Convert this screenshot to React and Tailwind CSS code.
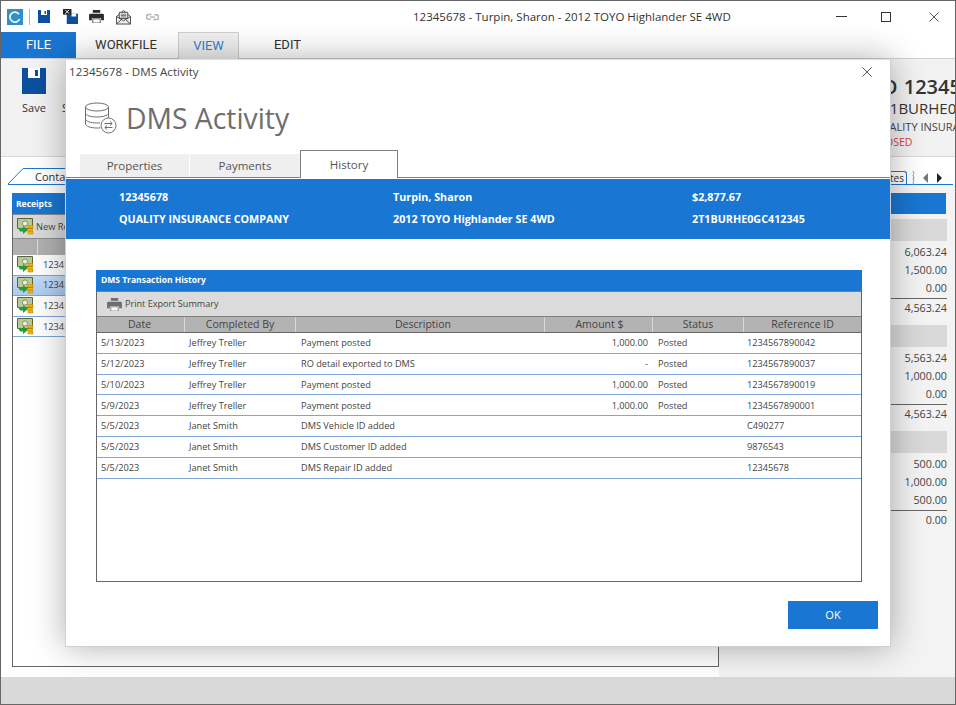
// App.jsx
// Repair-order window with the DMS Activity dialog open on top of it.

const UI = "[font-family:'Open_Sans','Noto_Sans',sans-serif]";

const historyRows = [
  ['5/13/2023', 'Jeffrey Treller', 'Payment posted', '1,000.00', 'Posted', '1234567890042'],
  ['5/12/2023', 'Jeffrey Treller', 'RO detail exported to DMS', '-', 'Posted', '1234567890037'],
  ['5/10/2023', 'Jeffrey Treller', 'Payment posted', '1,000.00', 'Posted', '1234567890019'],
  ['5/9/2023', 'Jeffrey Treller', 'Payment posted', '1,000.00', 'Posted', '1234567890001'],
  ['5/5/2023', 'Janet Smith', 'DMS Vehicle ID added', '', '', 'C490277'],
  ['5/5/2023', 'Janet Smith', 'DMS Customer ID added', '', '', '9876543'],
  ['5/5/2023', 'Janet Smith', 'DMS Repair ID added', '', '', '12345678'],
];

const totals = [
  ['6,063.24', '1,500.00', '0.00', '4,563.24'],
  ['5,563.24', '1,000.00', '0.00', '4,563.24'],
  ['500.00', '1,000.00', '500.00', '0.00'],
];

const columns = 'grid grid-cols-[88px_111px_249px_108px_91px_1fr]';

const headerCells = [
  ['Date', 'border-r border-[#d9d9d9] pr-[2px]'],
  ['Completed By', 'border-r border-[#d9d9d9]'],
  ['Description', 'border-r border-[#d9d9d9] pl-[6px]'],
  ['Amount $', 'border-r border-[#d9d9d9] pl-[2px]'],
  ['Status', 'border-r border-[#d9d9d9]'],
  ['Reference ID', ''],
];

function FloppyIcon({ className }) {
  return (
    <svg viewBox="0 0 24 26" className={className}>
      <path d="M0 0h24v26H0z" fill="#0b4f9e" />
      <path d="M6 0h12v10H6z" fill="#fff" />
      <path d="M13 2h3v6h-3z" fill="#0b4f9e" />
    </svg>
  );
}

function SaveCloseIcon() {
  return (
    <svg viewBox="0 0 16 16" className="w-[15px] h-[15px]">
      <path d="M4 5h12v11H4z" fill="#0b4f9e" />
      <path d="M9 5h5v3H9z" fill="#fff" />
      <path d="M0 0h9v6H0z" fill="#222" />
      <path d="M2.500 1l4 4M6.500 1l-4 4" stroke="#fff" strokeWidth="1" />
    </svg>
  );
}

function PrinterIcon({ className, color = '#2b2b2b' }) {
  return (
    <svg viewBox="0 0 16 14" className={className}>
      <path d="M4 0h8v3H4z" fill={color} />
      <path d="M1.500 4h13a1.500 1.500 0 0 1 1.500 1.500V11h-3V8.500H3V11H0V5.500A1.500 1.500 0 0 1 1.500 4z" fill={color} />
      <path d="M4 9.500h8V14H4z" fill="#fff" stroke={color} strokeWidth="0.8" />
    </svg>
  );
}

function MailIcon() {
  return (
    <svg viewBox="0 0 16 16" className="w-[15px] h-[16px]" fill="none" stroke="#444" strokeWidth="1">
      <path d="M.5 7.500v8h15v-8L8 1z" fill="#eee" />
      <path d="M3.500 3h9v6.500h-9z" fill="#fff" />
      <path d="M5 5h6M5 6.500h6M5 8h6" strokeWidth="0.8" />
      <path d="M.5 7.500 8 12l7.500-4.500M.5 15.500 6 10.500M15.500 15.500 10 10.500" />
    </svg>
  );
}

function LinkIcon() {
  return (
    <svg viewBox="0 0 14 8" className="w-[13px] h-[8px]" fill="none" stroke="#b4b4b4" strokeWidth="1.6">
      <path d="M6 1.200H3a2.600 2.600 0 0 0 0 5.200h2" />
      <path d="M8 6.800h3a2.600 2.600 0 0 0 0-5.200H9" />
      <path d="M4.500 4h5" />
    </svg>
  );
}

function ReceiptIcon() {
  return (
    <svg viewBox="0 0 17 17" className="w-[17px] h-[17px] shrink-0">
      <path d="M.5.5h15v10H.5z" fill="#b9c99a" stroke="#59663f" />
      <circle cx="8" cy="5.500" r="2.600" fill="#e9efd8" stroke="#6f8454" strokeWidth="0.8" />
      <path d="M1 10h5V8l5 4-5 4v-2.500H3z" fill="#2d9a32" />
      <path d="M11 7.500h5V10h-5zM10.500 10.500h5V13h-5zM11 13.500h5V16h-5z" fill="#f2b705" stroke="#b87d08" strokeWidth="0.5" />
    </svg>
  );
}

function DatabaseIcon() {
  return (
    <svg viewBox="0 0 32 32" className="w-[32px] h-[32px]" fill="none" stroke="#6f6f6f" strokeWidth="1">
      <ellipse cx="12" cy="5" rx="11.500" ry="4" />
      <path d="M.5 5v17c0 2.200 5 4 11.500 4 1.200 0 2.300 0 3.400-.2" />
      <path d="M23.500 5v11" />
      <path d="M.5 11c0 2.200 5 4 11.500 4 4.800 0 9-1 10.700-2.500" />
      <path d="M.5 17c0 2.200 5 4 11.500 4 1 0 2 0 3-.2" />
      <circle cx="23.500" cy="23.500" r="7.500" fill="#fff" />
      <path d="M19.500 21.500h7.500M25 19.500l2.200 2-2.200 2M27.500 25.500H20M22 23.500l-2.200 2 2.200 2" />
    </svg>
  );
}

function CloseGlyph({ className }) {
  return (
    <svg viewBox="0 0 11 11" className={className} fill="none" stroke="#444" strokeWidth="1">
      <path d="M.5.5l10 10M10.500.5l-10 10" />
    </svg>
  );
}

function TitleBar() {
  return (
    <div className="h-[31px] flex items-center relative shrink-0">
      <div className="flex items-center ml-[6px]">
        <div className="w-4 h-4 bg-[#2f8fc9] flex items-center justify-center">
          <svg viewBox="0 0 12 12" className="w-3 h-3" fill="none" stroke="#e8f6ff" strokeWidth="1.800">
            <path d="M10 3.200A5 5 0 1 0 10.600 8" />
          </svg>
        </div>
        <div className="w-px h-4 bg-[#b5b5b5] ml-[6px]" />
        <FloppyIcon className="w-3 h-[13px] ml-2" />
        <div className="ml-[13px]"><SaveCloseIcon /></div>
        <PrinterIcon className="w-[15px] h-[13px] ml-[11px]" />
        <div className="ml-[12px]"><MailIcon /></div>
        <div className="ml-[15px]"><LinkIcon /></div>
      </div>
      <span className={`absolute left-[412px] top-[8px] text-[11.500px] leading-[16px] whitespace-nowrap text-[#333] ${UI}`}>
        12345678 - Turpin, Sharon - 2012 TOYO Highlander SE 4WD
      </span>
      <div className="ml-auto flex items-center mr-[16px]">
        <div className="w-[11px] h-px bg-[#333]" />
        <div className="w-[10px] h-[10px] border border-[#333] ml-[34px]" />
        <CloseGlyph className="w-[10px] h-[10px] ml-[38px]" />
      </div>
    </div>
  );
}

function MenuBar() {
  return (
    <div className="h-[27px] flex text-[13px] text-[#333] border-b border-[#d0d0d0] shrink-0 [font-family:'Roboto',sans-serif]">
      <div className="w-[75px] h-[26px] bg-[#1976d2] text-white flex items-center justify-center">FILE</div>
      <div className="w-[102px] h-[26px] flex items-center justify-center pr-[2px]">WORKFILE</div>
      <div className="w-[61px] h-[27px] bg-[#f0f0f0] border border-[#cfcfcf] border-b-0 text-[#2f7fd8] flex items-center justify-center">VIEW</div>
      <div className="w-[95px] h-[26px] flex items-center justify-center pl-[2px]">EDIT</div>
    </div>
  );
}

function Ribbon() {
  return (
    <div className={`h-[98px] bg-[#f2f2f2] flex shrink-0 relative overflow-hidden border-b border-[#d8d8d8] ${UI}`}>
      <div className="w-[24px] ml-[21px] mt-[9px] flex flex-col items-center">
        <FloppyIcon className="w-6 h-[26px] shrink-0" />
        <span className="mt-[7px] text-[11px] leading-[14px] text-[#333]">Save</span>
      </div>
      <span className="ml-[16px] mt-[42px] text-[11px] leading-[14px] text-[#333]">Sync</span>
      <div className="absolute left-[872px] top-[15px] whitespace-nowrap">
        <div className="text-[20px] leading-[26px] font-semibold text-[#333] -ml-[4px] [word-spacing:1px]">RO 12345678</div>
        <div className="text-[15px] leading-[20px] mt-[-2px] text-[#333]">2T1BURHE0GC412345</div>
        <div className="text-[11px] leading-[14px] mt-[2px] text-[#444]">QUALITY INSURANCE COMPANY</div>
        <div className="text-[10.500px] leading-[14px] mt-[1px] text-[#d9413d]">CLOSED</div>
      </div>
    </div>
  );
}

function TabStrip() {
  return (
    <div className={`h-[28px] flex items-end relative shrink-0 border-b border-[#1976d2] ml-[7px] mr-[2px] text-[11px] text-[#333] ${UI}`}>
      <svg viewBox="0 0 18 16" className="w-[18px] h-[16px] shrink-0" fill="none" stroke="#1976d2">
        <path d="M0 16 15 .5h3" />
      </svg>
      <div className="h-[16px] w-[80px] border-t border-[#1976d2] pl-[9px] leading-[15px]">Contacts</div>
      <div className="ml-auto h-[13px] flex items-center mr-[11px]">
        <div className="h-[13px] border-t border-r border-[#1976d2] rounded-tr-[3px] bg-white pl-[6px] pr-[2px] leading-[12px] text-[10px]">Notes</div>
        <svg viewBox="0 0 3 14" className="w-[3px] h-[14px] ml-[5px]" fill="none" stroke="#5a8fd0">
          <path d="M1.500 0c-1.500 1 1.500 2 0 3.500s1.500 2 0 3.500 1.500 2 0 3.500 1.500 2 0 3.500" />
        </svg>
        <span className="ml-[8px] w-0 h-0 border-y-[5px] border-y-transparent border-r-[5px] border-r-[#777]" />
        <span className="ml-[9px] w-0 h-0 border-y-[5px] border-y-transparent border-l-[5px] border-l-[#222]" />
      </div>
    </div>
  );
}

function ReceiptsPanel() {
  return (
    <div className={`ml-[11px] mt-[8px] mb-[10px] w-[707px] shrink-0 border-l border-b border-r border-[#666] ${UI}`}>
      <div className="h-[21px] bg-[#1976d2] text-white text-[8.500px] font-bold flex items-center pl-[4px] pt-px -ml-px">Receipts</div>
      <div className="h-[25px] bg-[#d9d9d9] border-y border-[#8a8a8a] flex items-center pl-[4px] gap-[2px] text-[9.250px] text-[#444]">
        <ReceiptIcon />
        <span>New Receipt</span>
      </div>
      <div className="h-[16px] bg-[#b0b0b0] flex">
        <div className="w-[25px] border-r border-[#ddd]" />
      </div>
      {['1234', '1234', '1234', '1234'].map((num, i) => (
        <div
          key={i}
          className={`h-[20.600px] flex items-center pl-[4px] border-b border-[#7ea6d8] text-[9.250px] text-[#444] ${i === 1 ? 'bg-gradient-to-b from-[#c6ddf7] to-[#acccf0]' : 'bg-white'}`}
        >
          <ReceiptIcon />
          <span className="ml-[9px]">{num}5678</span>
        </div>
      ))}
    </div>
  );
}

function TotalsPanel() {
  return (
    <div className={`flex-1 bg-[#f3f3f3] pt-[8px] flex flex-col ${UI}`}>
      <div className="h-[21px] bg-[#1976d2] mr-[9px] shrink-0" />
      {totals.map((group, i) => (
        <div key={i} className={`mr-[8px] ml-[8px] shrink-0 ${i === 0 ? 'mt-[5px]' : 'mt-[8px]'}`}>
          <div className="h-[22px] bg-[#d9d9d9]" />
          <div className="pt-[2px] text-right text-[10.750px] font-medium text-[#444]">
            <div className="leading-[18px]">{group[0]}</div>
            <div className="leading-[18px]">{group[1]}</div>
            <div className="leading-[18px]">{group[2]}</div>
            <div className="border-t border-[#666] leading-[18px] mt-[1px]">{group[3]}</div>
          </div>
        </div>
      ))}
    </div>
  );
}

function HistoryTable() {
  return (
    <div className="ml-[30px] mr-[28px] mt-[31px] h-[312px] border-x border-b border-[#666] flex flex-col">
      <div className="h-[21px] -mx-px bg-[#1976d2] text-white text-[8.500px] font-bold flex items-center pl-[5px] shrink-0">
        DMS Transaction History
      </div>
      <div className="h-[26px] bg-[#dbdbdb] border-y border-[#7f7f7f] flex items-center pl-[10px] gap-[3px] text-[9.100px] text-[#444] shrink-0">
        <PrinterIcon className="w-[15px] h-[13px]" color="#6e6e6e" />
        <span>Print Export Summary</span>
      </div>
      <div className={`${columns} h-[16px] bg-[#b3b3b3] border-b border-[#666] text-[10.500px] text-[#444] leading-[15px] text-center shrink-0`}>
        {headerCells.map(([label, cellClass]) => (
          <div key={label} className={cellClass}>{label}</div>
        ))}
      </div>
      {historyRows.map((row, i) => (
        <div key={i} className={`${columns} h-[20.830px] border-b border-[#7ea6d8] items-center text-[9.200px] text-[#444] shrink-0`}>
          <div className="pl-[4px]">{row[0]}</div>
          <div className="pl-[4px]">{row[1]}</div>
          <div className="pl-[5px]">{row[2]}</div>
          <div className="text-right pr-[5px]">{row[3]}</div>
          <div className="pl-[5px]">{row[4]}</div>
          <div className="pl-[3px]">{row[5]}</div>
        </div>
      ))}
    </div>
  );
}

function DmsDialog() {
  return (
    <div className={`absolute left-[64px] top-[58px] w-[826px] h-[588px] bg-white border border-[#cfcfcf] border-t-[#e0e0e0] shadow-[0_0_32px_rgba(0,0,0,0.32)] flex flex-col ${UI}`}>
      <div className="h-[24px] flex items-center pl-[3px] pr-[18px] justify-between shrink-0">
        <span className="text-[11.600px] text-[#444]">12345678 - DMS Activity</span>
        <CloseGlyph className="w-[10px] h-[10px]" />
      </div>
      <div className="h-[70px] flex items-center pl-[19px] gap-[9px] pb-[2px] shrink-0">
        <DatabaseIcon />
        <span className="text-[28.300px] leading-[36px] text-[#6e6e6e]">DMS Activity</span>
      </div>
      <div className="h-[24px] flex pl-[14px] border-b border-[#7f7f7f] text-[11.500px] text-[#555] shrink-0">
        <div className="w-[109px] bg-[#efefef] flex items-center justify-center mr-px">Properties</div>
        <div className="w-[110px] bg-[#efefef] flex items-center justify-center">Payments</div>
        <div className="w-[98px] h-[28px] -mt-[4px] bg-white border border-[#7f7f7f] border-b-0 flex items-center justify-center">History</div>
      </div>
      <div className="h-[60px] mt-[1px] bg-[#1976d2] text-white text-[10.750px] font-bold grid grid-cols-[274px_299px_1fr] grid-rows-2 pl-[53px] pt-[7px] pb-[9px] items-center shrink-0">
        <div>12345678</div>
        <div>Turpin, Sharon</div>
        <div>$2,877.67</div>
        <div>QUALITY INSURANCE COMPANY</div>
        <div>2012 TOYO Highlander SE 4WD</div>
        <div>2T1BURHE0GC412345</div>
      </div>
      <HistoryTable />
      <div className="flex justify-end mt-[19px] mr-[12px]">
        <div className="w-[90px] h-[28px] bg-[#1976d2] text-white text-[11px] flex items-center justify-center">OK</div>
      </div>
    </div>
  );
}

export default function App() {
  return (
    <div className="w-[956px] h-[705px] relative overflow-hidden bg-white border border-[#666] flex flex-col">
      <TitleBar />
      <MenuBar />
      <Ribbon />
      <TabStrip />
      <div className="flex-1 flex min-h-0 bg-white">
        <ReceiptsPanel />
        <div className="w-[8px] bg-[#f3f3f3]" />
        <TotalsPanel />
      </div>
      <div className="h-[27px] bg-[#d9d9d9] shrink-0" />
      <DmsDialog />
    </div>
  );
}
